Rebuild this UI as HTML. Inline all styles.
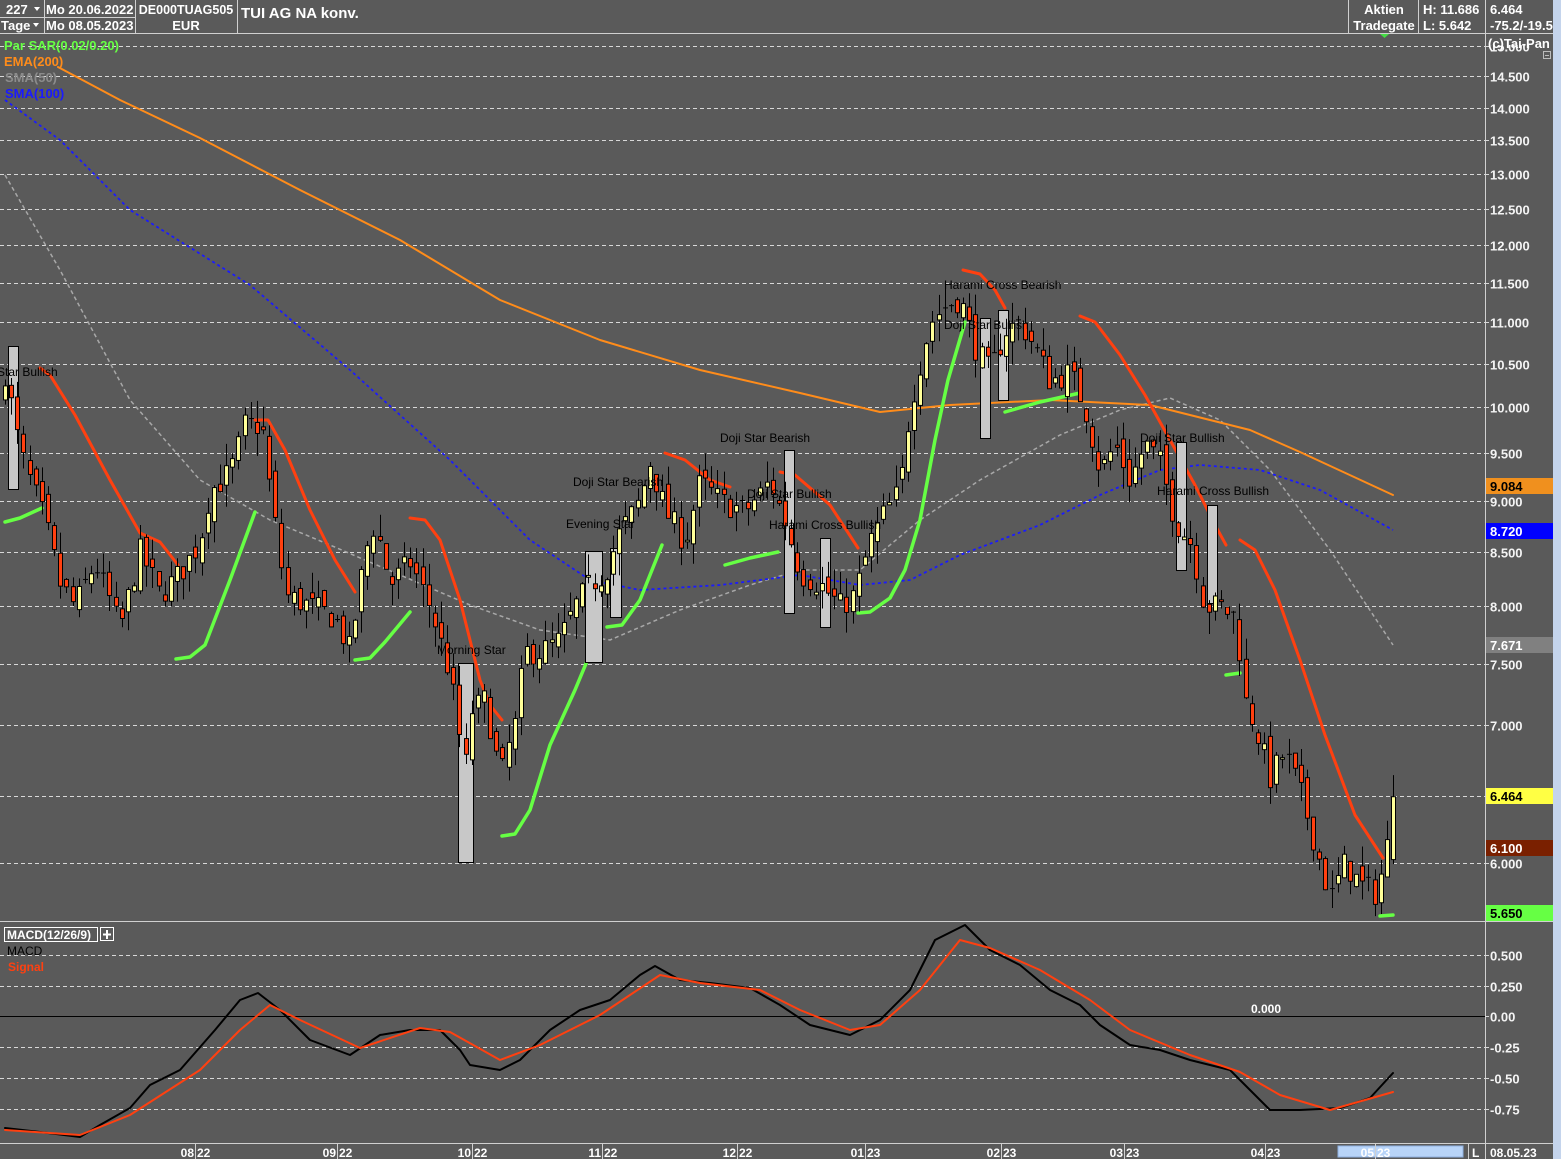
<!DOCTYPE html>
<html><head><meta charset="utf-8"><style>
html,body{margin:0;padding:0;background:#5a5a5a;}
body{width:1561px;height:1159px;overflow:hidden;position:relative;font-family:"Liberation Sans",sans-serif;}
svg{position:absolute;left:0;top:0;}
</style></head><body>
<svg id="s" width="1561" height="1159" xmlns="http://www.w3.org/2000/svg" font-family="Liberation Sans, sans-serif">
<rect width="1561" height="1159" fill="#5a5a5a"/>
<rect x="1553" y="0" width="8" height="1159" fill="#c4d4ec"/>
<g id="grid"></g>
<g id="lines"></g>
<g id="boxes"></g>
<g id="candles"></g>
<g id="top"></g>
</svg>
<script>
var NS="http://www.w3.org/2000/svg";
function el(p,t,a,txt){var e=document.createElementNS(NS,t);for(var k in a)e.setAttribute(k,a[k]);if(txt!=null)e.textContent=txt;p.appendChild(e);return e;}
var G=document.getElementById('grid'),L=document.getElementById('lines'),B=document.getElementById('boxes'),C=document.getElementById('candles'),T=document.getElementById('top');
function Y(p){return 2459-891*Math.log(p);}
el(T,'line',{x1:0,y1:33.5,x2:1553,y2:33.5,stroke:'#d0d0d0'});
[44,135,237,1348,1418,1485].forEach(function(x){el(T,'line',{x1:x+.5,y1:0,x2:x+.5,y2:33,stroke:'#d0d0d0'});});
el(T,'line',{x1:0,y1:17.5,x2:135,y2:17.5,stroke:'#d0d0d0'});
var hs={fill:'#fff','font-size':13,'font-weight':'bold'};
function tx(x,y,s,a){var o={x:x,y:y};for(var k in hs)o[k]=hs[k];for(var k in a)o[k]=a[k];return el(T,'text',o,s);}
tx(6,14,'227');tx(1,30,'Tage');
el(T,'path',{d:'M34 7h6l-3 4z M33 23h6l-3 4z',fill:'#fff'});
tx(46,14,'Mo 20.06.2022');tx(46,30,'Mo 08.05.2023');
tx(186,14,'DE000TUAG505',{'text-anchor':'middle','font-size':12.5});tx(186,30,'EUR',{'text-anchor':'middle'});
tx(241,18,'TUI AG NA konv.',{'font-size':15});
tx(1384,14,'Aktien',{'text-anchor':'middle'});tx(1384,30,'Tradegate',{'text-anchor':'middle'});
tx(1423,14,'H: 11.686');tx(1423,30,'L: 5.642');
tx(1490,14,'6.464');tx(1490,30,'-75.2/-19.5');
el(T,'path',{d:'M1380 34h9l-4.5 4z',fill:'#44dd44'});
tx(4,50,'Par SAR(0.02/0.20)',{fill:'#66ff44'});
tx(4,66,'EMA(200)',{fill:'#ff8c1a'});
tx(5,82,'SMA(50)',{fill:'#8c8c8c'});
tx(5,98,'SMA(100)',{fill:'#1a1aff'});
el(T,'rect',{x:1487,y:35,width:65,height:10,fill:'#5a5a5a'});
tx(1488,48,'(c)Tai-Pan');
el(T,'rect',{x:1543.5,y:51.5,width:7,height:7,fill:'none',stroke:'#bbb'});
el(T,'line',{x1:1545,y1:55.5,x2:1549,y2:55.5,stroke:'#bbb'});
el(G,'line',{x1:1485.5,y1:34,x2:1485.5,y2:1159,stroke:'#d0d0d0'});
el(G,'line',{x1:0,y1:921.5,x2:1553,y2:921.5,stroke:'#d0d0d0'});
el(G,'line',{x1:0,y1:1143.5,x2:1553,y2:1143.5,stroke:'#d0d0d0'});
[15,14.5,14,13.5,13,12.5,12,11.5,11,10.5,10,9.5,9,8.5,8,7.5,7,6.464,6].forEach(function(p){
 var y=Math.round(Y(p))+.5;
 el(G,'line',{x1:0,y1:y,x2:1485,y2:y,stroke:'#d8d8d8','stroke-dasharray':'4,3'});
 el(G,'line',{x1:1485,y1:y,x2:1489,y2:y,stroke:'#d8d8d8'});
 if(p!=6.464) el(G,'text',{x:1490,y:y+5,fill:'#f4f4f4','font-size':13,'font-weight':'bold'},p.toFixed(3));
});
function tag(y,bg,fg,s){el(G,'rect',{x:1486,y:y-8,width:67,height:16,fill:bg});el(G,'text',{x:1490,y:y+5,fill:fg,'font-size':13,'font-weight':'bold'},s);}
tag(Y(9.084)-7,'#f0901e','#000','9.084');
tag(531,'#0000ff','#fff','8.720');
tag(645,'#808080','#fff','7.671');
tag(796,'#ffff44','#000','6.464');
tag(848,'#7a2000','#fff','6.100');
tag(913,'#66ff44','#000','5.650');
[[955,'0.500'],[986,'0.250'],[1016,'0.00'],[1047,'-0.25'],[1078,'-0.50'],[1109,'-0.75']].forEach(function(a){
 var y=a[0]+.5;
 if(a[1]=='0.00') el(G,'line',{x1:0,y1:y,x2:1485,y2:y,stroke:'#000'});
 else el(G,'line',{x1:0,y1:y,x2:1485,y2:y,stroke:'#d8d8d8','stroke-dasharray':'4,3'});
 el(G,'line',{x1:1485,y1:y,x2:1489,y2:y,stroke:'#d8d8d8'});
 el(G,'text',{x:1490,y:y+5,fill:'#f4f4f4','font-size':13,'font-weight':'bold'},a[1]);
});
el(G,'text',{x:1251,y:1013,fill:'#fff','font-size':12,'font-weight':'bold'},'0.000');
el(G,'rect',{x:4.5,y:927.5,width:93,height:14,fill:'none',stroke:'#fff'});
el(G,'text',{x:7,y:939,fill:'#fff','font-size':12,'font-weight':'bold'},'MACD(12/26/9)');
el(G,'rect',{x:100.5,y:927.5,width:13,height:13,fill:'none',stroke:'#fff'});
el(G,'path',{d:'M103 934.5h8M107 930v9',stroke:'#fff','stroke-width':2});
el(G,'text',{x:7,y:955,fill:'#000','font-size':12},'MACD');
el(G,'text',{x:8,y:971,fill:'#ff4010','font-size':12,'font-weight':'bold'},'Signal');
el(G,'rect',{x:1338,y:1146,width:125,height:11,fill:'#b8d4f8',stroke:'#8fb0e0'});
[[195,'08','22'],[337,'09','22'],[472,'10','22'],[602,'11','22'],[737,'12','22'],[865,'01','23'],[1001,'02','23'],[1124,'03','23'],[1265,'04','23'],[1375,'05','23']].forEach(function(a){
 el(G,'line',{x1:a[0]+.5,y1:1144,x2:a[0]+.5,y2:1159,stroke:'#d0d0d0'});
 el(G,'text',{x:a[0]-1,y:1157,fill:'#fff','font-size':12,'font-weight':'bold','text-anchor':'end'},a[1]);
 el(G,'text',{x:a[0]+2,y:1157,fill:'#fff','font-size':12,'font-weight':'bold'},a[2]);
});
el(G,'line',{x1:1468.5,y1:1144,x2:1468.5,y2:1159,stroke:'#d0d0d0'});
el(G,'text',{x:1472,y:1157,fill:'#fff','font-size':12,'font-weight':'bold'},'L');
el(G,'text',{x:1490,y:1157,fill:'#fff','font-size':12,'font-weight':'bold'},'08.05.23');
function pl(pts,col,w,dash){var d=pts.map(function(p,i){return (i?'L':'M')+p[0]+' '+p[1];}).join('');var a={d:d,fill:'none',stroke:col,'stroke-width':w,'stroke-linejoin':'round','stroke-linecap':'round'};if(dash){a['stroke-dasharray']=dash;a['stroke-linecap']='butt';}el(L,'path',a);}
pl([[5,175],[60,270],[130,400],[200,480],[270,520],[330,545],[400,575],[470,605],[540,630],[610,640],[680,610],[750,585],[800,570],[860,570],[920,520],[980,480],[1060,435],[1120,410],[1170,398],[1220,420],[1270,470],[1330,550],[1393,645]],'#a8a8a8',1.5,'4,3');
pl([[5,100],[60,140],[130,210],[250,285],[350,370],[450,460],[530,540],[590,580],[640,590],[720,585],[800,575],[860,585],[910,580],[960,555],[1040,525],[1100,495],[1160,470],[1200,465],[1260,470],[1320,490],[1393,530]],'#1a1aff',1.8,'3,3');
pl([[58,67],[120,100],[200,138],[300,190],[400,240],[500,300],[600,340],[700,370],[800,393],[880,412],[950,405],[1050,400],[1150,405],[1250,430],[1300,452],[1393,495]],'#ff8c1a',2);
var G1='#66ff44',R1='#ff4010';
[[[5,522],[20,518],[42,508]],[[176,659],[190,657],[205,645],[230,580],[255,512]],[[355,660],[370,658],[385,642],[410,612]],[[502,836],[515,834],[530,810],[550,745],[575,690],[600,630]],[[607,627],[622,625],[640,600],[662,545]],[[725,565],[750,558],[778,552]],[[858,613],[870,612],[890,598],[905,570],[920,520],[935,440],[948,380],[965,322]],[[1005,412],[1040,402],[1080,393]],[[1226,675],[1240,673]],[[1380,916],[1393,915]]].forEach(function(p){pl(p,G1,3.5);});
[[[40,368],[50,375],[75,415],[110,480],[140,533],[160,542],[178,565]],[[255,420],[268,420],[285,450],[310,510],[335,560],[355,592]],[[410,518],[425,520],[440,540],[460,600],[480,680],[490,705],[502,720]],[[665,453],[685,460],[710,480],[730,487]],[[780,472],[795,475],[830,505],[858,548]],[[963,270],[980,274],[995,290],[1005,308]],[[1080,316],[1095,322],[1120,355],[1145,395],[1170,440],[1195,485],[1215,525],[1226,545]],[[1240,540],[1255,550],[1275,590],[1300,660],[1325,735],[1355,815],[1383,858]]].forEach(function(p){pl(p,R1,3);});
pl([[5,1128],[40,1132],[80,1137],[100,1125],[130,1108],[150,1085],[180,1070],[215,1030],[240,1000],[258,993],[280,1010],[310,1040],[350,1055],[380,1035],[410,1030],[440,1030],[460,1050],[470,1065],[500,1070],[520,1060],[550,1030],[580,1010],[610,1000],[640,975],[655,966],[680,980],[710,983],[750,988],[780,1005],[810,1025],[850,1035],[880,1020],[910,990],[935,940],[965,925],[990,950],[1020,965],[1050,990],[1080,1005],[1100,1025],[1130,1045],[1160,1050],[1190,1060],[1230,1070],[1250,1090],[1270,1110],[1300,1110],[1340,1108],[1370,1098],[1393,1073]],'#000',2);
pl([[5,1130],[80,1135],[130,1115],[200,1070],[240,1030],[270,1005],[300,1020],[360,1048],[420,1028],[450,1032],[500,1060],[540,1045],[600,1015],[660,975],[700,983],[760,990],[800,1010],[850,1030],[880,1025],[920,990],[960,940],[990,948],[1040,970],[1090,1000],[1130,1030],[1190,1055],[1240,1072],[1280,1095],[1330,1110],[1393,1092]],'#ff4010',2);
[[8,346,18,489],[458,663,473,862],[585,551,602,662],[610,548,621,617],[784,450,794,613],[820,538,830,627],[980,318,990,438],[998,310,1008,400],[1176,442,1186,570],[1207,505,1217,603]].forEach(function(b){el(B,'rect',{x:b[0]+.5,y:b[1]+.5,width:b[2]-b[0],height:b[3]-b[1],fill:'#c8c8c8',stroke:'#000'});});
var kp=[[5,10.4],[20,9.5],[45,8.8],[60,8.2],[75,8.0],[95,8.4],[120,7.8],[140,8.5],[160,8.1],[180,8.3],[200,8.6],[210,9.1],[230,9.3],[245,9.8],[262,9.8],[270,9.1],[285,8.1],[310,8.0],[335,7.9],[350,7.6],[365,8.5],[375,8.8],[390,8.2],[410,8.4],[430,8.0],[450,7.4],[465,6.6],[470,7.1],[485,7.2],[500,6.6],[515,7.0],[525,7.6],[540,7.6],[560,7.7],[575,8.0],[590,8.2],[605,8.3],[620,8.7],[640,9.0],[650,9.4],[665,8.9],[685,8.6],[700,9.2],[720,9.0],[745,8.9],[770,9.2],[785,8.8],[800,8.3],[820,8.2],[840,8.0],[855,8.1],[870,8.6],[885,8.9],[900,9.1],[910,10.0],[920,10.5],[930,11.0],[945,11.2],[960,11.3],[975,10.7],[990,10.4],[1005,10.9],[1020,11.0],[1035,10.7],[1050,10.3],[1070,10.4],[1085,10.0],[1100,9.3],[1115,9.6],[1130,9.2],[1145,9.6],[1160,9.4],[1175,8.8],[1190,8.6],[1205,8.0],[1220,8.0],[1235,7.9],[1245,7.2],[1255,7.0],[1270,6.6],[1285,6.8],[1300,6.5],[1320,6.0],[1330,5.75],[1345,6.0],[1360,5.85],[1375,5.8],[1385,6.0],[1393,6.46]];
function interp(x){for(var i=1;i<kp.length;i++){if(x<=kp[i][0]){var a=kp[i-1],b=kp[i];return a[1]+(b[1]-a[1])*(x-a[0])/(b[0]-a[0]);}}return kp[kp.length-1][1];}
var seed=7;function rnd(){seed=(seed*16807)%2147483647;return seed/2147483647;}
var N=227,x0=5,x1=1393,prev=10.0;
for(var i=0;i<N;i++){
 var x=Math.round(x0+(x1-x0)*i/(N-1));
 var c=interp(x)*(1+(rnd()-.5)*0.03);
 var o=prev*(1+(rnd()-.5)*0.02);
 if(i==N-1){o=6.02;c=6.46;}
 var hi=Math.max(o,c)*(1+rnd()*0.025),lo=Math.min(o,c)*(1-rnd()*0.025);
 el(C,'line',{x1:x+.5,y1:Y(hi),x2:x+.5,y2:Y(lo),stroke:'#000','stroke-width':1});
 var yt=Y(Math.max(o,c)),yb=Y(Math.min(o,c));
 if(yb-yt<1.5){el(C,'line',{x1:x-2,y1:yt+.5,x2:x+3,y2:yt+.5,stroke:'#000'});}
 else el(C,'rect',{x:x-1.5,y:yt,width:4,height:yb-yt,fill:c>o?'#ffff99':'#ff4010',stroke:'#000','stroke-width':1});
 prev=c;
}
[['Star Bullish',-3,376],['Morning Star',437,654],['Evening Star',566,528],['Doji Star Bearish',573,486],['Doji Star Bearish',720,442],['Doji Star Bullish',747,498],['Harami Cross Bullish',769,529],['Harami Cross Bearish',944,289],['Doji Star Bullish',944,329],['Doji Star Bullish',1140,442],['Harami Cross Bullish',1157,495]].forEach(function(a){el(C,'text',{x:a[1],y:a[2],fill:'#000','font-size':12},a[0]);});
</script>
</body></html>
